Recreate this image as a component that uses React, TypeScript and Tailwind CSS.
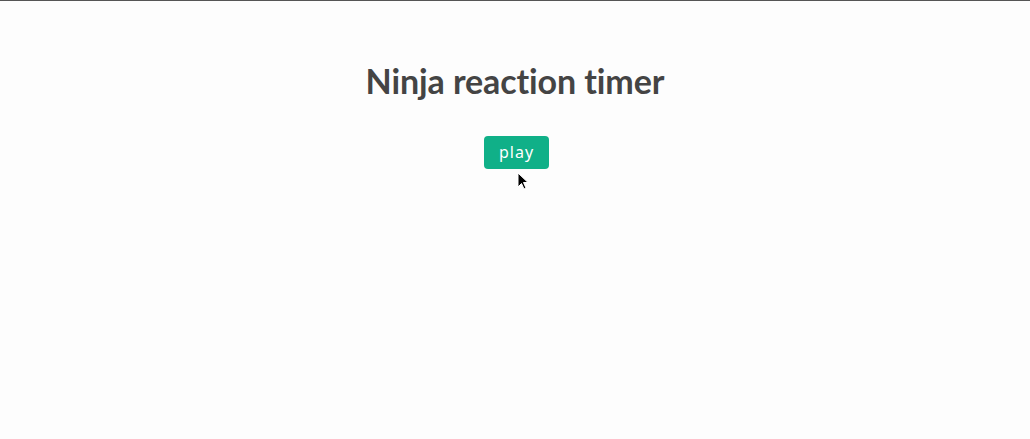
import React from "react";

export default function App() {
  return (
    <div className="relative w-[1030px] h-[439px] bg-[#fdfdfd] border-t border-[#555555] overflow-hidden" style={{ fontFamily: "Lato, 'Noto Sans', sans-serif" }}>
      <div className="flex flex-col items-center pt-[58px]">
        <h1 className="text-[34px] leading-[44px] font-bold text-[#444444] tracking-[-0.1px]">Ninja reaction timer</h1>
        <button className="mt-[33px] ml-[3px] w-[65px] h-[33px] rounded-[4px] bg-[#10b088] text-white text-[16px] tracking-[1px] flex items-center justify-center pb-[1px] font-['Noto_Sans',sans-serif]">play</button>
      </div>
      <svg className="absolute left-[517px] top-[171px]" width="12" height="19" viewBox="0 0 12 19">
        <path d="M1 1 L1 15 L4.5 11.5 L7 17 L9 16 L6.5 10.5 L11 10.5 Z" fill="#000" stroke="#fff" strokeWidth="1" />
      </svg>
    </div>
  );
}
